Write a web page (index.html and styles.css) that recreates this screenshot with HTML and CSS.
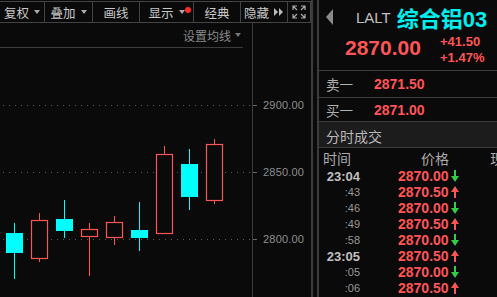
FILE: index.html
```html
<!DOCTYPE html>
<html lang="zh">
<head>
    <meta charset="UTF-8">
    <meta name="viewport" content="width=device-width, initial-scale=1.0">
    <title>LALT 综合铝03</title>
    <link rel="stylesheet" href="styles.css">
</head>
<body>
<div class="app">
    <section class="chart-panel">
        <nav class="toolbar">
            <div class="tool w45">复权<i class="caret"></i></div>
            <div class="tool w48">叠加<i class="caret"></i></div>
            <div class="tool w47">画线</div>
            <div class="tool w54">显示<i class="caret"></i><i class="dot"></i></div>
            <div class="tool w47">经典</div>
            <div class="tool w47">隐藏<i class="ff"><b></b><b></b></i></div>
            <div class="tool w23">
                <svg width="14" height="14" viewBox="0 0 14 14" class="full">
                    <path d="M1 5V1h4M1 1l4 4M9 1h4v4M13 1L9 5M1 9v4h4M1 13l4-4M13 9v4H9M13 13L9 9"/>
                </svg>
            </div>
        </nav>
        <div class="chart-body">
            <div class="plot">
                <div class="ma-bar"><span>设置均线</span><i class="caret dim"></i></div>
                <svg class="candles" width="252" height="249" viewBox="0 0 252 249">
                    <g class="grid">
                        <line x1="3" y1="57.5" x2="252" y2="57.5"/>
                        <line x1="3" y1="124.5" x2="252" y2="124.5"/>
                        <line x1="3" y1="191.5" x2="252" y2="191.5"/>
                    </g>
                    <g class="down">
                        <line x1="14.5" y1="175" x2="14.5" y2="231"/>
                        <rect x="6" y="185" width="17" height="20"/>
                        <line x1="64.5" y1="152" x2="64.5" y2="190"/>
                        <rect x="56" y="171" width="17" height="12"/>
                        <line x1="139.5" y1="154" x2="139.5" y2="203"/>
                        <rect x="131" y="182" width="17" height="8"/>
                        <line x1="189.5" y1="101" x2="189.5" y2="162"/>
                        <rect x="181" y="116" width="17" height="33"/>
                    </g>
                    <g class="up">
                        <line x1="39.5" y1="165" x2="39.5" y2="214"/>
                        <rect x="31.5" y="172.5" width="16" height="38"/>
                        <line x1="89.5" y1="175" x2="89.5" y2="228"/>
                        <rect x="81.5" y="181.5" width="16" height="7"/>
                        <line x1="114.5" y1="168" x2="114.5" y2="197"/>
                        <rect x="106.5" y="174.5" width="16" height="15"/>
                        <line x1="164.5" y1="98" x2="164.5" y2="106"/>
                        <rect x="156.5" y="106.5" width="16" height="79"/>
                        <line x1="214.5" y1="91" x2="214.5" y2="156"/>
                        <rect x="206.5" y="96.5" width="16" height="56"/>
                    </g>
                </svg>
            </div>
            <div class="axis">
                <span class="axis-label" style="top: 76px">2900.00</span>
                <span class="axis-label" style="top: 143px">2850.00</span>
                <span class="axis-label" style="top: 210px">2800.00</span>
            </div>
        </div>
    </section>

    <section class="quote-panel">
        <div class="title-row">
            <i class="back"></i>
            <span class="code">LALT</span>
            <span class="name">综合铝03</span>
        </div>
        <div class="price-row">
            <span class="last">2870.00</span>
            <div class="change">
                <span>+41.50</span>
                <span>+1.47%</span>
            </div>
        </div>
        <div class="book-row sell"><span class="label">卖一</span><span class="book-price">2871.50</span></div>
        <div class="book-row buy"><span class="label">买一</span><span class="book-price">2871.00</span></div>
        <div class="section-head">分时成交</div>
        <div class="trade-head"><span class="h-time">时间</span><span class="h-price">价格</span><span class="h-vol">现</span></div>
        <ul class="trades">
            <li><span class="time">23:04</span><span class="price">2870.00</span><svg class="arrow dn" viewBox="0 0 8 12"><path d="M3 0h2v6h3L4 12 0 6h3z"/></svg></li>
            <li><span class="time sec">:43</span><span class="price">2870.50</span><svg class="arrow up" viewBox="0 0 8 12"><path d="M3 12h2V6h3L4 0 0 6h3z"/></svg></li>
            <li><span class="time sec">:46</span><span class="price">2870.00</span><svg class="arrow dn" viewBox="0 0 8 12"><path d="M3 0h2v6h3L4 12 0 6h3z"/></svg></li>
            <li><span class="time sec">:49</span><span class="price">2870.50</span><svg class="arrow up" viewBox="0 0 8 12"><path d="M3 12h2V6h3L4 0 0 6h3z"/></svg></li>
            <li><span class="time sec">:58</span><span class="price">2870.00</span><svg class="arrow dn" viewBox="0 0 8 12"><path d="M3 0h2v6h3L4 12 0 6h3z"/></svg></li>
            <li><span class="time">23:05</span><span class="price">2870.50</span><svg class="arrow up" viewBox="0 0 8 12"><path d="M3 12h2V6h3L4 0 0 6h3z"/></svg></li>
            <li><span class="time sec">:05</span><span class="price">2870.00</span><svg class="arrow dn" viewBox="0 0 8 12"><path d="M3 0h2v6h3L4 12 0 6h3z"/></svg></li>
            <li><span class="time sec">:06</span><span class="price">2870.50</span><svg class="arrow up" viewBox="0 0 8 12"><path d="M3 12h2V6h3L4 0 0 6h3z"/></svg></li>
        </ul>
    </section>
</div>
</body>
</html>
```

FILE: styles.css
```css
* {
    margin: 0;
    padding: 0;
    box-sizing: border-box;
}

body {
    width: 497px;
    height: 297px;
    overflow: hidden;
    background: #0a0a0a;
    color: #b4b4b4;
    font-family: "Liberation Sans", "Noto Sans CJK SC", sans-serif;
}

.app {
    display: flex;
    height: 297px;
}

/* left: k-line chart */
.chart-panel {
    width: 313px;
    border-right: 2px solid #3c3c3c;
    display: flex;
    flex-direction: column;
}

.toolbar {
    display: flex;
    height: 22px;
    margin-top: 1px;
    border-top: 1px solid #444;
    border-bottom: 1px solid #444;
}

.tool {
    position: relative;
    display: flex;
    align-items: center;
    justify-content: center;
    gap: 5px;
    border-right: 1px solid #444;
    font-family: "Noto Sans CJK SC", sans-serif;
    font-size: 12.5px;
    color: #c8c8c8;
}

.w45 { width: 45px; }
.w48 { width: 48px; }
.w47 { width: 47px; }
.w54 { width: 54px; }
.w23 { width: 23px; }

.caret {
    width: 0;
    height: 0;
    border-left: 3px solid transparent;
    border-right: 3px solid transparent;
    border-top: 4px solid #aaa;
}

.caret.dim {
    border-top-color: #777;
}

.dot {
    position: absolute;
    right: 2px;
    top: 5px;
    width: 6px;
    height: 6px;
    border-radius: 50%;
    background: #ff2a2a;
}

.ff {
    display: flex;
}

.ff b {
    width: 0;
    height: 0;
    border-top: 4px solid transparent;
    border-bottom: 4px solid transparent;
    border-left: 4px solid #bbb;
    margin-right: 1px;
}

.full {
    fill: none;
    stroke: #aaa;
    stroke-width: 1.2;
}

.chart-body {
    flex: 1;
    display: flex;
}

.plot {
    width: 252px;
    display: flex;
    flex-direction: column;
}

.ma-bar {
    height: 25px;
    margin-right: 9px;
    padding-right: 2px;
    border-bottom: 1px solid #3c3c3c;
    display: flex;
    justify-content: flex-end;
    align-items: center;
    gap: 4px;
    font-family: "Noto Sans CJK SC", sans-serif;
    font-size: 12px;
    color: #8a8a8a;
}

.candles {
    display: block;
}

.grid line {
    stroke: #5a5a5a;
    stroke-width: 1;
    stroke-dasharray: 1 5;
}

.down line { stroke: #00ffff; stroke-width: 1; }
.down rect { fill: #00ffff; }
.up line { stroke: #ff5555; stroke-width: 1; }
.up rect { fill: #0a0a0a; stroke: #ff5555; stroke-width: 1.2; }

.axis {
    position: relative;
    flex: 1;
    border-left: 1px solid #3c3c3c;
}

.axis-label {
    position: absolute;
    left: 10px;
    line-height: 12px;
    font-size: 11px;
    letter-spacing: 0.2px;
    color: #8e8e8e;
}

.axis-label::before {
    content: "";
    position: absolute;
    left: -10px;
    top: 6px;
    width: 4px;
    height: 1px;
    background: #666;
}

/* right: quote panel */
.quote-panel {
    width: 180px;
    margin-left: 4px;
    border-left: 2px solid #3c3c3c;
    display: flex;
    flex-direction: column;
}

.title-row {
    height: 34px;
    display: flex;
    align-items: center;
    padding-left: 7px;
}

.back {
    width: 0;
    height: 0;
    border-top: 8px solid transparent;
    border-bottom: 8px solid transparent;
    border-right: 7px solid #8a8a8a;
}

.code {
    margin-left: 23px;
    font-size: 15px;
    color: #c0c0c0;
}

.name {
    margin-left: 6px;
    font-size: 22px;
    font-weight: bold;
    color: #00f0f0;
}

.price-row {
    height: 37px;
    display: flex;
    padding: 2px 0 0 26px;
    border-bottom: 1px solid #3c3c3c;
}

.last {
    width: 95px;
    font-size: 21px;
    line-height: 24px;
    font-weight: bold;
    color: #ff5555;
}

.change {
    display: flex;
    flex-direction: column;
    margin-top: -2px;
    font-size: 13px;
    line-height: 16px;
    font-weight: bold;
    color: #ff5555;
}

.book-row {
    display: flex;
    align-items: center;
    padding-left: 7px;
    border-bottom: 1px solid #3c3c3c;
}

.book-row.sell { height: 27px; }
.book-row.buy { height: 24px; }

.label {
    width: 48px;
    font-family: "Noto Sans CJK SC", sans-serif;
    font-size: 13.5px;
    color: #b0b0b0;
}

.book-price {
    font-size: 14px;
    font-weight: bold;
    color: #ff5555;
}

.section-head {
    height: 26px;
    display: flex;
    align-items: center;
    padding: 2px 0 0 7px;
    background: #1c1c1c;
    border-bottom: 1px solid #3c3c3c;
    font-family: "Noto Sans CJK SC", sans-serif;
    font-size: 14px;
    color: #b8b8b8;
}

.trade-head {
    height: 20px;
    display: flex;
    align-items: center;
    padding-left: 4px;
    font-family: "Noto Sans CJK SC", sans-serif;
    font-size: 14px;
    color: #aaa;
    white-space: nowrap;
}

.h-price { margin-left: 70px; }
.h-vol { margin-left: 41px; }

.trades {
    list-style: none;
}

.trades li {
    height: 16px;
    display: flex;
    align-items: center;
}

.time {
    width: 41px;
    text-align: right;
    font-size: 13px;
    font-weight: bold;
    color: #c0c0c0;
}

.time.sec {
    font-size: 11px;
    font-weight: normal;
    color: #999;
}

.price {
    margin-left: 38px;
    font-size: 14px;
    font-weight: bold;
    color: #ff5555;
}

.arrow {
    width: 8px;
    height: 12px;
    margin-left: 2px;
}

.arrow.dn { fill: #33cc44; }
.arrow.up { fill: #ff5555; }
```
